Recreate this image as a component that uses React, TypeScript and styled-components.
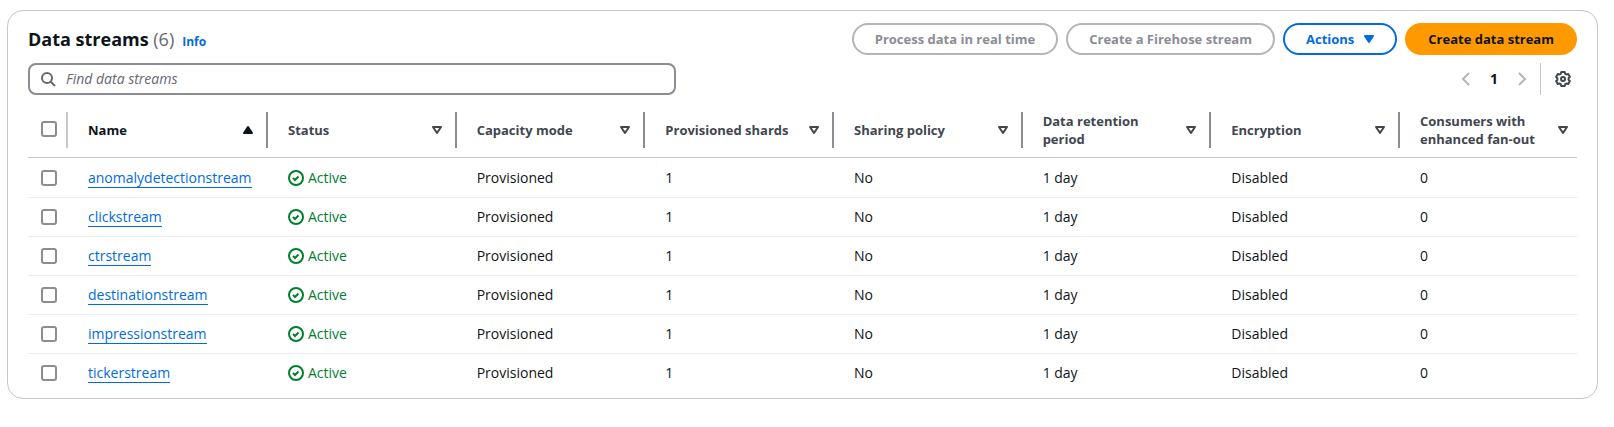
import React from "react";
import styled, { createGlobalStyle } from "styled-components";

const GlobalStyle = createGlobalStyle`
  * { box-sizing: border-box; }
  body {
    margin: 0;
    padding: 10px 16px 16px 7px;
    background: #ffffff;
    color: #0f141a;
    font-family: "Open Sans", "Noto Sans", sans-serif;
    font-size: 14px;
    line-height: 20px;
  }
  button, input { font: inherit; }
`;

const Card = styled.section`
  border: 1px solid #c6c6cd;
  border-radius: 16px;
  padding: 12px 20px 5px;
`;

const Header = styled.header`
  display: flex;
  justify-content: space-between;
  align-items: center;
`;

const TitleGroup = styled.div`
  display: flex;
  align-items: baseline;
  gap: 8px;
`;

const Title = styled.h2`
  margin: 0;
  font-size: 18px;
  line-height: 24px;
  font-weight: 700;
`;

const Count = styled.span`
  font-weight: 400;
  color: #656871;
`;

const InfoLink = styled.a`
  font-size: 12px;
  font-weight: 700;
  color: #006ce0;
  text-decoration: none;
`;

const ButtonRow = styled.div`
  display: flex;
  gap: 8px;
`;

const palette = {
  normal: { bg: "#ffffff", border: "#006ce0", text: "#006ce0" },
  disabled: { bg: "#ffffff", border: "#b4b4bb", text: "#8c8c94" },
  primary: { bg: "#ff9900", border: "#ff9900", text: "#0f141a" },
};

const Button = styled.button<{ $kind: keyof typeof palette }>`
  display: inline-flex;
  align-items: center;
  gap: 10px;
  height: 32px;
  padding: 0 21px;
  border: 2px solid ${(p) => palette[p.$kind].border};
  border-radius: 16px;
  background: ${(p) => palette[p.$kind].bg};
  color: ${(p) => palette[p.$kind].text};
  font-size: 13px;
  font-weight: 700;
  white-space: nowrap;
`;

const Tools = styled.div`
  display: flex;
  justify-content: space-between;
  align-items: center;
  margin-top: 8px;
`;

const SearchBox = styled.label`
  display: flex;
  align-items: center;
  gap: 10px;
  flex: 0 1 648px;
  height: 32px;
  padding: 0 10px;
  border: 2px solid #8c8c94;
  border-radius: 8px;
  color: #656871;
`;

const SearchInput = styled.input`
  flex: 1;
  min-width: 0;
  padding: 0;
  border: 0;
  outline: 0;
  background: none;
  &::placeholder {
    color: #656871;
    font-style: italic;
    opacity: 1;
  }
`;

const ToolsEnd = styled.div`
  display: flex;
  align-items: center;
`;

const Pagination = styled.nav`
  display: flex;
  align-items: center;
  padding-right: 4px;
`;

const PageButton = styled.button<{ $current?: boolean }>`
  display: flex;
  justify-content: center;
  align-items: center;
  width: 28px;
  height: 32px;
  padding: 0;
  border: 0;
  background: none;
  font-weight: 700;
  color: ${(p) => (p.$current ? "#0f141a" : "#b4b4bb")};
`;

const SettingsArea = styled.div`
  display: flex;
  align-items: center;
  height: 32px;
  padding: 0 6px 0 14px;
  border-left: 1px solid #c6c6cd;
`;

const IconButton = styled.button`
  display: flex;
  padding: 0;
  border: 0;
  background: none;
  color: #424650;
`;

const Table = styled.table`
  width: 100%;
  table-layout: fixed;
  border-collapse: separate;
  border-spacing: 0;
`;

const Col = styled.col<{ $width?: number }>`
  width: ${(p) => (p.$width ? `${p.$width}px` : "auto")};
`;

const HeadCell = styled.th`
  padding: 17px 0 9px;
  border-bottom: 1px solid #c6c6cd;
  text-align: left;
  font-weight: 700;
`;

const HeadInner = styled.div<{ $divider: string }>`
  display: flex;
  align-items: center;
  height: 36px;
  border-right: 2px solid ${(p) => p.$divider};
`;

const SortButton = styled.button<{ $sorted: boolean; $last: boolean }>`
  display: flex;
  flex: 1;
  justify-content: space-between;
  align-items: center;
  padding: 0 ${(p) => (p.$last ? 4 : 10)}px 0 20px;
  border: 0;
  background: none;
  color: ${(p) => (p.$sorted ? "#0f141a" : "#424650")};
  font-size: 13px;
  font-weight: 700;
  line-height: 18px;
  text-align: left;
`;

const Cell = styled.td`
  height: 39px;
  padding: 0 20px;
  border-bottom: 1px solid #ebebf0;
  white-space: nowrap;
`;

const CheckCell = styled(Cell)`
  padding: 0 0 0 13px;
`;

const Row = styled.tr`
  &:first-child > td {
    height: 40px;
    padding-top: 1px;
  }
  &:last-child > td { border-bottom-color: transparent; }
`;

const Checkbox = styled.input`
  appearance: none;
  display: block;
  width: 16px;
  height: 16px;
  margin: 0;
  border: 2px solid #8c8c94;
  border-radius: 3px;
  background: #ffffff;
`;

const CheckHead = styled(HeadInner)`
  padding: 0 0 2px 13px;
`;

const StreamLink = styled.a`
  color: #006ce0;
  text-decoration: none;
  border-bottom: 1px solid #006ce0;
`;

const Status = styled.span`
  display: flex;
  align-items: center;
  gap: 4px;
  color: #00802f;
`;

const Icon = styled.svg`
  display: block;
  flex: none;
  width: 16px;
  height: 16px;
  fill: none;
  stroke: currentColor;
  stroke-width: 2;
`;

const CaretIcon = styled(Icon)`
  width: 10px;
  fill: currentColor;
`;

const SortIcon = ({ sorted }: { sorted: boolean }) => (
  <Icon viewBox="0 0 16 16" aria-hidden="true">
    {sorted ? (
      <path d="M8 5 4 11h8z" fill="currentColor" strokeLinejoin="round" />
    ) : (
      <path d="M4 5h8l-4 6z" strokeLinejoin="round" />
    )}
  </Icon>
);

const columns = [
  "Name",
  "Status",
  "Capacity mode",
  "Provisioned shards",
  "Sharing policy",
  "Data retention period",
  "Encryption",
  "Consumers with enhanced fan-out",
];

const streams = [
  "anomalydetectionstream",
  "clickstream",
  "ctrstream",
  "destinationstream",
  "impressionstream",
  "tickerstream",
];

export default function App() {
  return (
    <>
      <GlobalStyle />
      <Card>
        <Header>
          <TitleGroup>
            <Title>
              Data streams <Count>({streams.length})</Count>
            </Title>
            <InfoLink href="#info">Info</InfoLink>
          </TitleGroup>
          <ButtonRow>
            <Button $kind="disabled" disabled>Process data in real time</Button>
            <Button $kind="disabled" disabled>Create a Firehose stream</Button>
            <Button $kind="normal">
              Actions
              <CaretIcon viewBox="3 0 10 16" aria-hidden="true">
                <path d="M4 5h8l-4 6z" strokeLinejoin="round" />
              </CaretIcon>
            </Button>
            <Button $kind="primary">Create data stream</Button>
          </ButtonRow>
        </Header>
        <Tools>
          <SearchBox>
            <Icon viewBox="0 0 16 16" aria-hidden="true">
              <circle cx="7" cy="7" r="5" />
              <path d="m15 15-4.5-4.5" />
            </Icon>
            <SearchInput type="text" aria-label="Find data streams" placeholder="Find data streams" />
          </SearchBox>
          <ToolsEnd>
            <Pagination aria-label="Pagination">
              <PageButton aria-label="Previous page" disabled>
                <Icon viewBox="0 0 16 16"><path d="M11 2 5 8l6 6" /></Icon>
              </PageButton>
              <PageButton $current>1</PageButton>
              <PageButton aria-label="Next page" disabled>
                <Icon viewBox="0 0 16 16"><path d="m5 2 6 6-6 6" /></Icon>
              </PageButton>
            </Pagination>
            <SettingsArea>
              <IconButton aria-label="Preferences">
                <Icon viewBox="0 0 16 16" strokeLinejoin="round">
                  <path d="M6.3 1h3.4l.5 1.8 1.2.7 1.8-.5 1.7 2.9-1.3 1.4v1.4l1.3 1.4-1.7 2.9-1.8-.5-1.2.7-.5 1.8H6.300l-.5-1.800-1.200-.700-1.800.500-1.700-2.900 1.300-1.400V7.300L1.100 5.900 2.800 3l1.800.5 1.200-.7z" />
                  <circle cx="8" cy="8" r="2" />
                </Icon>
              </IconButton>
            </SettingsArea>
          </ToolsEnd>
        </Tools>
        <Table>
          <colgroup>
            <Col $width={40} />
            <Col $width={200} />
            {columns.slice(2).map((c) => <Col key={c} />)}
            <Col $width={177} />
          </colgroup>
          <thead>
            <tr>
              <HeadCell>
                <CheckHead $divider="#c6c6cd">
                  <Checkbox type="checkbox" aria-label="Select all streams" />
                </CheckHead>
              </HeadCell>
              {columns.map((name, i) => {
                const last = i === columns.length - 1;
                return (
                  <HeadCell key={name}>
                    <HeadInner $divider={last ? "transparent" : "#8c8c94"}>
                      <SortButton $sorted={i === 0} $last={last}>
                        {name}
                        <SortIcon sorted={i === 0} />
                      </SortButton>
                    </HeadInner>
                  </HeadCell>
                );
              })}
            </tr>
          </thead>
          <tbody>
            {streams.map((name) => (
              <Row key={name}>
                <CheckCell>
                  <Checkbox type="checkbox" aria-label={`Select ${name}`} />
                </CheckCell>
                <Cell><StreamLink href={`#${name}`}>{name}</StreamLink></Cell>
                <Cell>
                  <Status>
                    <Icon viewBox="0 0 16 16" aria-hidden="true">
                      <circle cx="8" cy="8" r="7" />
                      <path d="m5 8 2 2 3.500-3.500" />
                    </Icon>
                    Active
                  </Status>
                </Cell>
                <Cell>Provisioned</Cell>
                <Cell>1</Cell>
                <Cell>No</Cell>
                <Cell>1 day</Cell>
                <Cell>Disabled</Cell>
                <Cell>0</Cell>
              </Row>
            ))}
          </tbody>
        </Table>
      </Card>
    </>
  );
}
